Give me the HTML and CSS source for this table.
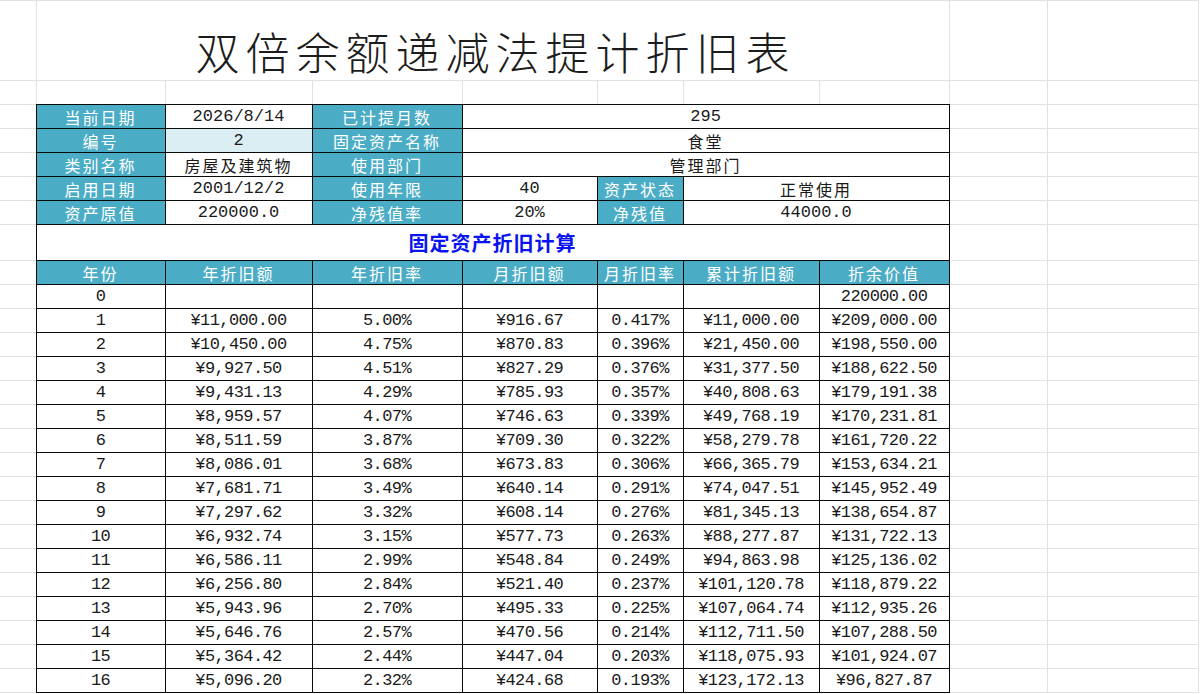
FILE: index.html
```html
<!DOCTYPE html>
<html lang="zh-CN">
<head>
<meta charset="utf-8">
<title>双倍余额递减法提计折旧表</title>
<link rel="stylesheet" href="styles.css">
</head>
<body>
<table class="sheet">
<colgroup>
<col class="w-a"><col class="w-b"><col class="w-c"><col class="w-d"><col class="w-e"><col class="w-f"><col class="w-g"><col class="w-h"><col class="w-i"><col class="w-j">
</colgroup>
<tbody>
<tr class="title-row"><td></td><td colspan="7" class="title">双倍余额递减法提计折旧表</td><td></td><td></td></tr>
<tr><td></td><td></td><td></td><td></td><td></td><td></td><td></td><td></td><td></td><td></td></tr>

<tr><td></td><td class="c lab">当前日期</td><td class="c info">2026/8/14</td><td class="c lab">已计提月数</td><td class="c info" colspan="4">295</td><td></td><td></td></tr>
<tr><td></td><td class="c lab">编号</td><td class="c sel info">2</td><td class="c lab">固定资产名称</td><td class="c cj" colspan="4">食堂</td><td></td><td></td></tr>
<tr><td></td><td class="c lab">类别名称</td><td class="c cj">房屋及建筑物</td><td class="c lab">使用部门</td><td class="c cj" colspan="4">管理部门</td><td></td><td></td></tr>
<tr><td></td><td class="c lab">启用日期</td><td class="c info">2001/12/2</td><td class="c lab">使用年限</td><td class="c info">40</td><td class="c lab">资产状态</td><td class="c cj" colspan="2">正常使用</td><td></td><td></td></tr>
<tr><td></td><td class="c lab">资产原值</td><td class="c info">220000.0</td><td class="c lab">净残值率</td><td class="c info">20%</td><td class="c lab">净残值</td><td class="c info" colspan="2">44000.0</td><td></td><td></td></tr>

<tr class="sec-row"><td></td><td class="c sec" colspan="7">固定资产折旧计算</td><td></td><td></td></tr>
<tr><td></td><td class="c lab">年份</td><td class="c lab">年折旧额</td><td class="c lab">年折旧率</td><td class="c lab">月折旧额</td><td class="c lab">月折旧率</td><td class="c lab">累计折旧额</td><td class="c lab">折余价值</td><td></td><td></td></tr>

<tr><td></td><td class="c">0</td><td class="c"></td><td class="c"></td><td class="c"></td><td class="c"></td><td class="c"></td><td class="c">220000.00</td><td></td><td></td></tr>
<tr><td></td><td class="c">1</td><td class="c">¥11,000.00</td><td class="c">5.00%</td><td class="c">¥916.67</td><td class="c">0.417%</td><td class="c">¥11,000.00</td><td class="c">¥209,000.00</td><td></td><td></td></tr>
<tr><td></td><td class="c">2</td><td class="c">¥10,450.00</td><td class="c">4.75%</td><td class="c">¥870.83</td><td class="c">0.396%</td><td class="c">¥21,450.00</td><td class="c">¥198,550.00</td><td></td><td></td></tr>
<tr><td></td><td class="c">3</td><td class="c">¥9,927.50</td><td class="c">4.51%</td><td class="c">¥827.29</td><td class="c">0.376%</td><td class="c">¥31,377.50</td><td class="c">¥188,622.50</td><td></td><td></td></tr>
<tr><td></td><td class="c">4</td><td class="c">¥9,431.13</td><td class="c">4.29%</td><td class="c">¥785.93</td><td class="c">0.357%</td><td class="c">¥40,808.63</td><td class="c">¥179,191.38</td><td></td><td></td></tr>
<tr><td></td><td class="c">5</td><td class="c">¥8,959.57</td><td class="c">4.07%</td><td class="c">¥746.63</td><td class="c">0.339%</td><td class="c">¥49,768.19</td><td class="c">¥170,231.81</td><td></td><td></td></tr>
<tr><td></td><td class="c">6</td><td class="c">¥8,511.59</td><td class="c">3.87%</td><td class="c">¥709.30</td><td class="c">0.322%</td><td class="c">¥58,279.78</td><td class="c">¥161,720.22</td><td></td><td></td></tr>
<tr><td></td><td class="c">7</td><td class="c">¥8,086.01</td><td class="c">3.68%</td><td class="c">¥673.83</td><td class="c">0.306%</td><td class="c">¥66,365.79</td><td class="c">¥153,634.21</td><td></td><td></td></tr>
<tr><td></td><td class="c">8</td><td class="c">¥7,681.71</td><td class="c">3.49%</td><td class="c">¥640.14</td><td class="c">0.291%</td><td class="c">¥74,047.51</td><td class="c">¥145,952.49</td><td></td><td></td></tr>
<tr><td></td><td class="c">9</td><td class="c">¥7,297.62</td><td class="c">3.32%</td><td class="c">¥608.14</td><td class="c">0.276%</td><td class="c">¥81,345.13</td><td class="c">¥138,654.87</td><td></td><td></td></tr>
<tr><td></td><td class="c">10</td><td class="c">¥6,932.74</td><td class="c">3.15%</td><td class="c">¥577.73</td><td class="c">0.263%</td><td class="c">¥88,277.87</td><td class="c">¥131,722.13</td><td></td><td></td></tr>
<tr><td></td><td class="c">11</td><td class="c">¥6,586.11</td><td class="c">2.99%</td><td class="c">¥548.84</td><td class="c">0.249%</td><td class="c">¥94,863.98</td><td class="c">¥125,136.02</td><td></td><td></td></tr>
<tr><td></td><td class="c">12</td><td class="c">¥6,256.80</td><td class="c">2.84%</td><td class="c">¥521.40</td><td class="c">0.237%</td><td class="c">¥101,120.78</td><td class="c">¥118,879.22</td><td></td><td></td></tr>
<tr><td></td><td class="c">13</td><td class="c">¥5,943.96</td><td class="c">2.70%</td><td class="c">¥495.33</td><td class="c">0.225%</td><td class="c">¥107,064.74</td><td class="c">¥112,935.26</td><td></td><td></td></tr>
<tr><td></td><td class="c">14</td><td class="c">¥5,646.76</td><td class="c">2.57%</td><td class="c">¥470.56</td><td class="c">0.214%</td><td class="c">¥112,711.50</td><td class="c">¥107,288.50</td><td></td><td></td></tr>
<tr><td></td><td class="c">15</td><td class="c">¥5,364.42</td><td class="c">2.44%</td><td class="c">¥447.04</td><td class="c">0.203%</td><td class="c">¥118,075.93</td><td class="c">¥101,924.07</td><td></td><td></td></tr>
<tr><td></td><td class="c">16</td><td class="c">¥5,096.20</td><td class="c">2.32%</td><td class="c">¥424.68</td><td class="c">0.193%</td><td class="c">¥123,172.13</td><td class="c">¥96,827.87</td><td></td><td></td></tr>
</tbody>
</table>
</body>
</html>
```

FILE: styles.css
```css
* { box-sizing: border-box; }
html, body { margin: 0; padding: 0; background: #fff; }
body {
  font-family: "Liberation Mono", "Noto Sans CJK SC", monospace;
  color: #1a1a1a;
  overflow: hidden;
}
.sheet {
  border-collapse: collapse;
  table-layout: fixed;
  width: 1198px;
}
.w-a { width: 36px; }
.w-b { width: 129px; }
.w-c { width: 147px; }
.w-d { width: 150px; }
.w-e { width: 135px; }
.w-f { width: 86px; }
.w-g { width: 136px; }
.w-h { width: 130px; }
.w-i { width: 98px; }
.w-j { width: 151px; }

.sheet td {
  border: 1px solid #e2e2e2;
  height: 24px;
  padding: 0;
  text-align: center;
  vertical-align: middle;
  white-space: nowrap;
  overflow: hidden;
  font-size: 17px;
  letter-spacing: -0.6px;
  line-height: 22px;
}
.sheet td:first-child { border-left: none; }
.sheet tr.title-row td { height: 80px; }
.sheet tr.sec-row td { height: 36px; }

.sheet td.title {
  font-family: "Noto Sans CJK SC", sans-serif;
  font-weight: 300;
  font-size: 44px;
  letter-spacing: 6px;
  line-height: 56px;
  vertical-align: bottom;
  overflow: visible;
  padding: 0 0 1px 6px;
  color: #1c1c1c;
}
.sheet td.c { border: 1px double #0a0a0a; }
.sheet td.info { letter-spacing: 0; }
.sheet td.lab {
  background: #4bacc6;
  color: #fff;
  font-family: "Noto Sans CJK SC", sans-serif;
  font-size: 16px;
  letter-spacing: 2px;
}
.sheet td.cj {
  font-family: "Noto Sans CJK SC", sans-serif;
  font-size: 16px;
  letter-spacing: 2px;
}
.sheet td.sel { background: #daeef3; }
.sheet td.sec {
  font-family: "Noto Sans CJK SC", sans-serif;
  color: #0a14f0;
  font-weight: bold;
  font-size: 20px;
  letter-spacing: 1px;
}
```
